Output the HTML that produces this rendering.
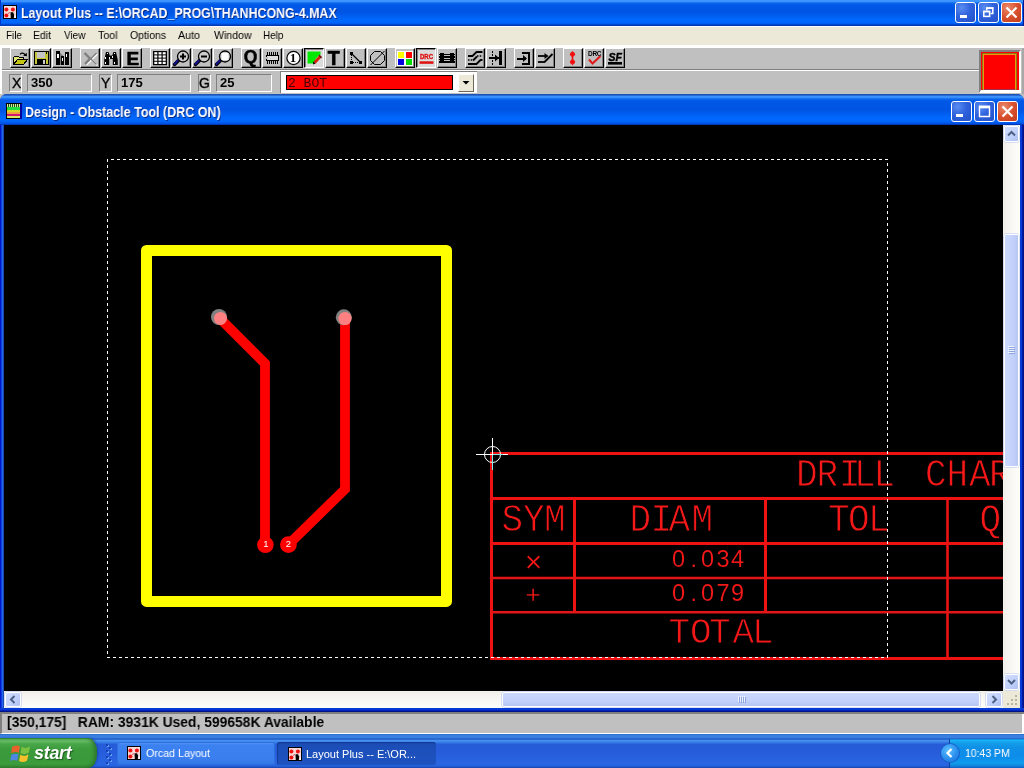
<!DOCTYPE html>
<html lang="en">
<head>
<meta charset="utf-8">
<title>Layout Plus -- E:\ORCAD_PROG\THANHCONG-4.MAX</title>
<style>
html,body{margin:0;padding:0;overflow:hidden;}
body{width:1024px;height:768px;overflow:hidden;position:relative;background:#c0c0c0;font-family:"Liberation Sans",sans-serif;font-size:11px;color:#000;}
.abs{position:absolute;}
svg{position:absolute;display:block;overflow:visible;}
.txt,#menu span,.sunk span,#status span,#start,#tk1,#tk2,#clock,#lay,svg{will-change:transform;}
/* ---------- main title bar ---------- */
#title{left:0;top:0;width:1024px;height:26px;background:linear-gradient(180deg,#3e96ff 0,#3b92fd 1.500px,#0d68ee 3px,#0058e7 5px,#0054e3 12px,#005ef0 16px,#0068ff 20px,#0066fc 22.500px,#0057ea 24px,#0038b6 25px,#0038b6 26px);}
#title .txt,#ctitle .txt{color:#fff;font-weight:bold;font-size:14px;white-space:nowrap;text-shadow:1px 1px 0 #0a2a86;transform-origin:0 0;}
.wb{width:21px;height:21px;border-radius:3px;box-sizing:border-box;border:1px solid #fff;background:radial-gradient(circle at 30% 25%,#5a8df0 0,#2f62dd 45%,#2350c8 100%);}
.wb.cl{background:radial-gradient(circle at 30% 25%,#ea8a6c 0,#d9512f 50%,#c23c1c 100%);}
/* ---------- menu ---------- */
#menu{left:0;top:26px;width:1024px;height:19px;background:#ece9d8;box-shadow:inset 0 1px 0 #fbfbff;}
#menu span{position:absolute;top:3px;font-size:11px;white-space:nowrap;transform-origin:0 0;}
/* ---------- toolbars ---------- */
#tb{left:0;top:45px;width:1024px;height:49px;background:#c0c0c0;}
.btn{position:absolute;top:3px;width:20px;height:20px;box-sizing:border-box;background:#c0c0c0;border-left:1px solid #fff;border-top:1px solid #fff;border-right:1px solid #000;border-bottom:1px solid #000;box-shadow:inset -1px -1px 0 #808080;}
.btn.dn{background:#dcdcdc;border-left:1px solid #000;border-top:1px solid #000;border-right:1px solid #fff;border-bottom:1px solid #fff;box-shadow:inset 1px 1px 0 #808080;}
.btn svg{left:-1px;top:-1px;width:20px;height:20px;}
.sunk{position:absolute;top:29px;height:18px;box-sizing:border-box;border-left:1px solid #808080;border-top:1px solid #808080;border-right:1px solid #fff;border-bottom:1px solid #fff;font-weight:bold;font-size:13px;line-height:16px;white-space:nowrap;}
.lab{top:0;font-weight:normal;font-size:14px;-webkit-text-stroke:0.350px #000;}
/* ---------- child window ---------- */
#child{left:0;top:94px;width:1024px;height:618px;background:#0831d9;border-radius:7px 7px 0 0;overflow:hidden;}
#ctitle{left:0;top:0;width:1024px;height:31px;background:linear-gradient(180deg,#1c53b4 0,#1c53b4 1.200px,#3b92fd 2px,#3b92fd 3.300px,#0d68ee 5px,#0058e7 7px,#0054e3 16px,#005ef0 20px,#0068ff 24px,#0066fc 27px,#0057ea 29px,#0048d4 30.300px,#00157a 31px);}
#canvas{left:4px;top:31px;width:999px;height:566px;background:#000;overflow:hidden;}
.sbtn{position:absolute;box-sizing:border-box;border:1px solid #fff;border-radius:2px;background:linear-gradient(135deg,#d3defd 0,#c0d0fb 60%,#aebff0 100%);box-shadow:0 0 0 0.5px #b4c4ee;}
/* ---------- status / taskbar ---------- */
#status{left:0;top:712px;width:1024px;height:22px;background:#c0c0c0;border-top:2px solid #808080;border-left:2px solid #808080;border-bottom:1px solid #fff;box-sizing:border-box;}
#status span{position:absolute;left:5px;top:0px;font-weight:bold;font-size:14px;transform:scaleX(0.99);white-space:pre;transform-origin:0 0;}
#task{left:0;top:734px;width:1024px;height:34px;background:linear-gradient(180deg,#2a63c0 0,#3a80e0 1.200px,#3a80e0 3.800px,#2664cc 4.600px,#2664cc 5.400px,#4590f0 6.200px,#4590f0 7px,#3478e4 8.500px,#275cd8 10.500px,#265cda 18px,#2a66e2 30px,#2662dc 32px,#1c4bb8 33.500px,#1a44a8 34px);}
</style>
</head>
<body>

<!-- ======= main title bar ======= -->
<div id="title" class="abs">
  <svg style="left:3px;top:5px" width="14" height="14" viewBox="0 0 14 14">
    <rect width="14" height="14" fill="#000"/><rect x="1" y="1" width="12" height="12" fill="#f8dada"/>
    <circle cx="3.400" cy="4.600" r="2" fill="#f01010"/><circle cx="9.900" cy="4.600" r="2" fill="#f01010"/><circle cx="3.400" cy="10.600" r="2" fill="#f01010"/>
    <path d="M7.500 7.200L10 7.300L11.200 9.800L10.800 13H7.800Z" fill="#000"/><path d="M11.500 10.500h1.500v2.500h-1.500z" fill="#fff"/><path d="M5 8.500L7 7.500" stroke="#d03030" stroke-width="0.800"/>
  </svg>
  <div class="abs" style="left:1023px;top:0;width:1px;height:26px;background:#00188f"></div><div class="abs" style="left:0;top:0;width:1px;height:26px;background:#0038cc"></div>
  <div class="abs txt" id="t1" style="left:21px;top:5px;transform:scaleX(0.884);">Layout Plus -- E:\ORCAD_PROG\THANHCONG-4.MAX</div>
  <div class="abs wb" style="left:955px;top:2px;"><svg width="19" height="19" viewBox="0 0 19 19"><rect x="4" y="12" width="7" height="3" fill="#fff"/></svg></div>
  <div class="abs wb" style="left:978px;top:2px;"><svg width="19" height="19" viewBox="0 0 19 19"><path d="M7.800 7.500V5.200h6v5.300h-2.300" fill="none" stroke="#fff" stroke-width="1.500"/><path d="M7.100 4.900h7.400" stroke="#fff" stroke-width="1.400"/><rect x="4.800" y="8.600" width="5.800" height="4.800" fill="none" stroke="#fff" stroke-width="1.500"/><path d="M4.100 8.400h7.200" stroke="#fff" stroke-width="1.400"/></svg></div>
  <div class="abs wb cl" style="left:1001px;top:2px;"><svg width="19" height="19" viewBox="0 0 19 19"><path d="M4.500 4.500L14.500 14.500M14.500 4.500L4.500 14.500" stroke="#fff" stroke-width="2.200"/></svg></div>
</div>

<!-- ======= menu bar ======= -->
<div id="menu" class="abs">
  <span style="left:5.5px;transform:scaleX(0.9)">File</span><span style="left:33px;transform:scaleX(0.95)">Edit</span><span style="left:63.5px;transform:scaleX(0.9)">View</span><span style="left:97.5px;transform:scaleX(0.97)">Tool</span><span style="left:130px;transform:scaleX(0.95)">Options</span><span style="left:178px;transform:scaleX(0.97)">Auto</span><span style="left:213.5px;transform:scaleX(0.96)">Window</span><span style="left:263px;transform:scaleX(0.9)">Help</span>
</div>

<!-- ======= toolbars ======= -->
<div id="tb" class="abs">
  <div class="abs" style="left:0;top:0;width:1024px;height:3px;background:#fff"></div>
  <div class="abs" style="left:0;top:0;width:2px;height:49px;background:#fff"></div>
  <div class="abs" style="left:2px;top:24px;width:977px;height:1px;background:#808080"></div>
  <div class="abs" style="left:2px;top:25px;width:977px;height:1px;background:#fff"></div>
  <div class="abs" style="left:1022px;top:3px;width:2px;height:46px;background:#a8a8a8"></div>
  <div class="btn" style="left:10px"><svg viewBox="0 0 20 20"><g shape-rendering="crispEdges"><path d="M3.500 16.500V9.500L4.500 8.500H8.500L9.500 9.500H13.500V11.500H7.500Z" fill="#e4e47c" stroke="#000"/><path d="M3.500 16.500L7.500 11.500H17.500L13.500 16.500Z" fill="#c4c414" stroke="#000"/></g><path d="M10 6.300Q12.500 3.800 15.300 6.800" fill="none" stroke="#000" stroke-width="1.200"/><path d="M13.200 7.800L17 8.300L16.700 4.800Z" fill="#000"/></svg></div>
  <div class="btn" style="left:31px"><svg viewBox="0 0 20 20"><g shape-rendering="crispEdges"><rect x="3.500" y="3.500" width="14" height="13" fill="#c4c43a" stroke="#000"/><rect x="6" y="4" width="8" height="6" fill="#c4c4c4"/><rect x="6" y="11" width="9" height="6" fill="#000"/><rect x="12" y="12" width="2" height="4" fill="#c8c8c8"/><rect x="15" y="4" width="1" height="2" fill="#000"/></g></svg></div>
  <div class="btn" style="left:52px"><svg viewBox="0 0 20 20"><g shape-rendering="crispEdges"><rect x="4" y="3" width="4" height="14" fill="#000"/><rect x="5" y="6" width="2" height="4" fill="#fff"/><path d="M8 4L11 8V17H8Z" fill="#808080"/><rect x="9" y="8" width="3" height="9" fill="#000"/><rect x="10" y="10" width="1" height="3" fill="#fff"/><rect x="13" y="4" width="4" height="13" fill="#000"/><rect x="14" y="6" width="1" height="3" fill="#fff"/></g></svg></div>
  <div class="btn" style="left:80px"><svg viewBox="0 0 20 20"><path d="M6 6L17.500 17.500M17.500 6L6.500 17" fill="none" stroke="#fff" stroke-width="1.100"/><path d="M5 5L16.500 16.500M16.500 5L5.500 16" fill="none" stroke="#808080" stroke-width="1.300"/><path d="M4.500 5L10 10.500L5 16" fill="none" stroke="#808080" stroke-width="2.400"/></svg></div>
  <div class="btn" style="left:101px"><svg viewBox="0 0 20 20"><path d="M5 4h2.500l1 2.500v1h3v-1L12.500 4H15l1.800 8V17h-5v-6h-3.600v6h-5v-5Z" fill="#000"/><g fill="#fff" shape-rendering="crispEdges"><rect x="6" y="5" width="1" height="1"/><rect x="13" y="5" width="1" height="1"/><rect x="4" y="9" width="1" height="2"/><rect x="8" y="9" width="1" height="2"/><rect x="11" y="8" width="1" height="2"/><rect x="4" y="14" width="1" height="2"/><rect x="13" y="14" width="1" height="2"/></g></svg></div>
  <div class="btn" style="left:122px"><svg viewBox="0 0 20 20"><text x="4.400" y="17" font-family="'Liberation Sans',sans-serif" font-weight="bold" font-size="19" fill="#000" stroke="#000" stroke-width="0.600">E</text></svg></div>
  <div class="btn" style="left:150px"><svg viewBox="0 0 20 20"><rect x="3" y="3" width="14" height="14.200" fill="#000"/><g fill="#fff"><rect x="4.3" y="4.2" width="3" height="2.200"/><rect x="8.5" y="4.2" width="3" height="2.200"/><rect x="12.7" y="4.2" width="3" height="2.200"/><rect x="4.3" y="7.4" width="3" height="2.200"/><rect x="8.5" y="7.4" width="3" height="2.200"/><rect x="12.7" y="7.4" width="3" height="2.200"/><rect x="4.3" y="10.6" width="3" height="2.200"/><rect x="8.5" y="10.6" width="3" height="2.200"/><rect x="12.7" y="10.6" width="3" height="2.200"/><rect x="4.3" y="13.8" width="3" height="2.200"/><rect x="8.5" y="13.8" width="3" height="2.200"/><rect x="12.7" y="13.8" width="3" height="2.200"/></g></svg></div>
  <div class="btn" style="left:171px"><svg viewBox="0 0 20 20"><path d="M7.500 12.500L3.500 16.500" stroke="#000" stroke-width="3.400" stroke-linecap="round"/><path d="M7 12.500L3.500 16" stroke="#10108c" stroke-width="2" stroke-linecap="round"/><circle cx="12" cy="8.500" r="5.500" fill="#cdcdcd" stroke="#000" stroke-width="1.300"/><path d="M9 8.500h6M12 5.500v6" stroke="#000" stroke-width="2"/></svg></div>
  <div class="btn" style="left:192px"><svg viewBox="0 0 20 20"><path d="M7.500 12.500L3.500 16.500" stroke="#000" stroke-width="3.400" stroke-linecap="round"/><path d="M7 12.500L3.500 16" stroke="#10108c" stroke-width="2" stroke-linecap="round"/><circle cx="12" cy="8.500" r="5.500" fill="#cdcdcd" stroke="#000" stroke-width="1.300"/><path d="M9 8.500h6" stroke="#000" stroke-width="2"/></svg></div>
  <div class="btn" style="left:213px"><svg viewBox="0 0 20 20"><path d="M7.500 12.500L3.500 16.500" stroke="#000" stroke-width="3.400" stroke-linecap="round"/><path d="M7 12.500L3.500 16" stroke="#10108c" stroke-width="2" stroke-linecap="round"/><circle cx="12" cy="8.500" r="5.500" fill="#cdcdcd" stroke="#000" stroke-width="1.300"/><rect x="8.500" y="5" width="7" height="7" fill="#fff"/></svg></div>
  <div class="btn" style="left:241px"><svg viewBox="0 0 20 20"><text x="2.800" y="15.400" font-family="'Liberation Sans',sans-serif" font-weight="bold" font-size="17.500" fill="#000" stroke="#000" stroke-width="0.500">Q</text></svg></div>
  <div class="btn" style="left:262px"><svg viewBox="0 0 20 20"><g shape-rendering="crispEdges"><path d="M5.500 4v4M7.500 4v4M9.500 4v4M11.500 4v4M13.500 4v4M15.500 4v4M5.500 12v4M7.500 12v4M9.500 12v4M11.500 12v4M13.500 12v4M15.500 12v4" stroke="#000"/><rect x="4.500" y="7.500" width="12" height="5" fill="#e0e0e0" stroke="#000"/><rect x="4" y="9" width="2" height="2" fill="#c0c0c0"/></g></svg></div>
  <div class="btn" style="left:283px"><svg viewBox="0 0 20 20"><circle cx="10.500" cy="10" r="6.600" fill="#fff" stroke="#000" stroke-width="1.200"/><text x="6.800" y="14.300" font-family="'Liberation Serif',serif" font-weight="bold" font-size="13" fill="#000">1</text></svg></div>
  <div class="btn dn" style="left:304px"><svg viewBox="0 0 20 20"><path d="M3.500 3.500H16.500V7Q11.500 8.500 10.500 15.500H3.500Z" fill="#00e800"/><path d="M10.500 14.800L16.500 8.200" stroke="#d82010" stroke-width="2.800"/><path d="M9 16.500L9.300 13.500L11.500 15.500Z" fill="#000"/><path d="M15.300 6.500L18 9L17 10.500L14.500 8Z" fill="#701008"/></svg></div>
  <div class="btn" style="left:325px"><svg viewBox="0 0 20 20"><text x="2.800" y="17.200" font-family="'Liberation Sans',sans-serif" font-weight="bold" font-size="19.500" fill="#000" stroke="#000" stroke-width="0.700">T</text></svg></div>
  <div class="btn" style="left:346px"><svg viewBox="0 0 20 20"><g shape-rendering="crispEdges"><rect x="4" y="4" width="3" height="3" fill="#000"/><rect x="4" y="13" width="3" height="3" fill="#000"/><rect x="13" y="13" width="3" height="3" fill="#000"/><path d="M5.500 7v6M7 14.500h6" stroke="#000" stroke-dasharray="1 1"/></g><path d="M5.500 5.500L14.500 14.500" stroke="#000" stroke-width="1.200"/></svg></div>
  <div class="btn" style="left:367px"><svg viewBox="0 0 20 20"><path d="M7.500 3.500H13.500L17.500 7.500V12.500L13.500 16.500H7.500L3.500 12.500V7.500Z" fill="none" stroke="#000" stroke-width="1"/><path d="M3.500 17L17.500 3" stroke="#000" stroke-width="1"/></svg></div>
  <div class="btn" style="left:395px"><svg viewBox="0 0 20 20"><g shape-rendering="crispEdges"><rect x="2" y="3" width="16" height="15" fill="#fff"/><rect x="3" y="4" width="6" height="6" fill="#ffff00"/><rect x="11" y="4" width="6" height="6" fill="#ff0000"/><rect x="3" y="11" width="6" height="6" fill="#0000e0"/><rect x="11" y="11" width="6" height="6" fill="#00e000"/></g></svg></div>
  <div class="btn dn" style="left:416px"><svg viewBox="0 0 20 20"><text x="4" y="10.500" font-family="'Liberation Sans',sans-serif" font-weight="bold" font-size="7.500" fill="#e01010" stroke="#e01010" stroke-width="0.400" textLength="13" lengthAdjust="spacingAndGlyphs">DRC</text><rect x="3.500" y="13.300" width="14" height="2.500" fill="#e01010"/></svg></div>
  <div class="btn" style="left:437px"><svg viewBox="0 0 20 20"><g shape-rendering="crispEdges"><rect x="3" y="5" width="4" height="10" fill="#000"/><rect x="13" y="5" width="4" height="10" fill="#000"/><path d="M2 6.500h16M2 9h16M2 11.500h16M2 14h16" stroke="#000" stroke-width="1.400"/></g></svg></div>
  <div class="btn" style="left:465px"><svg viewBox="0 0 20 20"><g fill="none" stroke="#000" stroke-width="1.800"><path d="M3 8h4.500L11.500 4H17.500"/><path d="M3 16h8.500L15.500 12H17.500"/><path d="M8 12.500L12 8.500"/></g><path d="M3 12h5M12 8h5.500" stroke="#000" stroke-width="1.600" stroke-dasharray="1.500 1.200"/></svg></div>
  <div class="btn" style="left:486px"><svg viewBox="0 0 20 20"><g shape-rendering="crispEdges"><path d="M6.500 3v14" stroke="#000" stroke-dasharray="2 1"/><rect x="13" y="3" width="3" height="14" fill="#000"/><path d="M3 10h10" stroke="#000" stroke-width="2"/></g><path d="M9 6.500L13 10L9 13.500Z" fill="#000"/></svg></div>
  <div class="btn" style="left:514px"><svg viewBox="0 0 20 20"><g shape-rendering="crispEdges" fill="none" stroke="#000" stroke-width="2"><path d="M8 5h7v11h-7"/><path d="M3 10.500h9"/></g><path d="M9 7L13 10.500L9 14Z" fill="#000"/></svg></div>
  <div class="btn" style="left:535px"><svg viewBox="0 0 20 20"><g fill="none" stroke="#000" stroke-width="1.800"><path d="M3 8h9"/><path d="M3 14h7"/><path d="M9.500 14L17.500 6"/></g><path d="M9.500 5L13.500 8L9.500 11Z" fill="#000"/></svg></div>
  <div class="btn" style="left:563px"><svg viewBox="0 0 20 20"><path d="M9.500 6v8" stroke="#f01010" stroke-width="1.600"/><path d="M9.500 3L12.400 6.200L9.500 9.400L6.600 6.200Z" fill="#f01010"/><circle cx="9.500" cy="6.200" r="2.300" fill="#f01010"/><path d="M9.500 10.800L12.400 14L9.500 17.200L6.600 14Z" fill="#f01010"/><circle cx="9.500" cy="14" r="2.300" fill="#f01010"/></svg></div>
  <div class="btn" style="left:584px"><svg viewBox="0 0 20 20"><text x="4" y="8.300" font-family="'Liberation Sans',sans-serif" font-weight="bold" font-size="6.500" fill="#000" textLength="13.500" lengthAdjust="spacing">DRC</text><path d="M5 11.500L8.500 15.500L16.500 8" fill="none" stroke="#e01818" stroke-width="2"/></svg></div>
  <div class="btn" style="left:605px"><svg viewBox="0 0 20 20"><text x="3.600" y="12.800" font-family="'Liberation Sans',sans-serif" font-weight="bold" font-style="italic" font-size="10.500" fill="#000" stroke="#000" stroke-width="0.400">SF</text><rect x="3" y="14" width="14" height="2.600" fill="#000"/></svg></div>
  <div class="sunk" style="left:9px;width:13px;"><span class="abs lab" style="left:1.500px;">X</span></div>
  <div class="sunk" style="left:27px;width:65px;"><span class="abs" style="left:3px;top:0;">350</span></div>
  <div class="sunk" style="left:99px;width:13px;"><span class="abs lab" style="left:1px;">Y</span></div>
  <div class="sunk" style="left:117px;width:74px;"><span class="abs" style="left:3px;top:0;">175</span></div>
  <div class="sunk" style="left:198px;width:13px;"><span class="abs lab" style="left:0px;">G</span></div>
  <div class="sunk" style="left:216px;width:56px;"><span class="abs" style="left:3px;top:0;">25</span></div>
  <!-- layer combo -->
  <div class="abs" style="left:280px;top:26px;width:197px;height:22px;background:#fff;border-left:1px solid #808080;border-top:1px solid #808080;box-sizing:border-box;"></div>
  <div class="abs" style="left:286px;top:30px;width:167px;height:15px;background:#ff0000;border:1px solid #000;box-sizing:border-box;font-family:'Liberation Mono',monospace;font-size:13px;line-height:13px;color:#480000;white-space:pre;"><span class="abs" id="lay" style="left:1.300px;top:1px;">2 BOT</span></div>
  <div class="abs" style="left:458px;top:29px;width:16px;height:18px;background:#ece9d8;border-left:1px solid #fff;border-top:1px solid #fff;border-right:1px solid #6d6a5c;border-bottom:1px solid #6d6a5c;box-sizing:border-box;"><svg width="14" height="16" viewBox="0 0 14 16"><path d="M3.500 6h7L7 9.500Z" fill="#000"/></svg></div>
  <!-- colour swatch -->
  <div class="abs" style="left:979px;top:5px;width:42px;height:43px;box-sizing:border-box;background:#ff0000;border-left:2px solid #808080;border-top:2px solid #808080;border-right:2px solid #fff;border-bottom:3px solid #fff;"></div>
  <div class="abs" style="left:982px;top:8px;width:35px;height:37px;box-sizing:border-box;border:1px solid #8a7a10;border-bottom-color:#a03050;"></div>
  <div class="abs" style="left:983px;top:9px;width:33px;height:36px;box-sizing:border-box;border:1px solid #e89a10;border-bottom:none;"></div>
</div>

<!-- ======= MDI child ======= -->
<div id="child" class="abs">
  <div id="ctitle" class="abs">
    <svg style="left:6px;top:9px" width="16" height="16" viewBox="0 0 16 16" shape-rendering="crispEdges">
      <rect width="16" height="16" fill="#000"/>
      <rect x="1" y="1" width="13" height="3" fill="#d8e8a0"/>
      <rect x="1" y="4" width="13" height="3" fill="#20e040"/>
      <rect x="1" y="7" width="13" height="2" fill="#d8d820"/>
      <rect x="1" y="9" width="13" height="2" fill="#f0a040"/>
      <rect x="1" y="11" width="13" height="2" fill="#d01870"/>
      <rect x="1" y="13" width="13" height="2" fill="#d8e860"/>
      <path d="M2.500 1v3M4.500 1v3M6.500 1v3M8.500 1v3M10.500 1v3M12.500 1v3" stroke="#185018" stroke-width="1"/>
      <rect x="14" y="1" width="2" height="15" fill="#0000a0"/>
    </svg>
    <div class="abs txt" id="t2" style="left:25px;top:10px;transform:scaleX(0.893);">Design - Obstacle Tool (DRC ON)</div>
    <div class="abs wb" style="left:951px;top:7px;"><svg width="19" height="19" viewBox="0 0 19 19"><rect x="4" y="12" width="7" height="3" fill="#fff"/></svg></div>
    <div class="abs wb" style="left:974px;top:7px;"><svg width="19" height="19" viewBox="0 0 19 19"><path d="M4.500 4.500h10v10h-10z" fill="none" stroke="#fff" stroke-width="1.400"/><path d="M4 5h11" stroke="#fff" stroke-width="2.600"/></svg></div>
    <div class="abs wb cl" style="left:997px;top:7px;"><svg width="19" height="19" viewBox="0 0 19 19"><path d="M4.500 4.500L14.500 14.500M14.500 4.500L4.500 14.500" stroke="#fff" stroke-width="2.200"/></svg></div>
  </div>
  <div id="canvas" class="abs">
    <svg style="left:0;top:0" width="999" height="566" viewBox="4 125 999 566">
      <!-- drill chart table -->
      <g stroke="#ee1212" fill="none" stroke-width="3">
        <path d="M491.500 452v208M490 453.500h520M490 498.500h520M490 543.500h520M490 658.500h520"/>
        <path d="M574.500 497v116M765.500 497v116"/>
        <path d="M947.500 497v163" stroke-width="2.600"/>
        <path d="M490 578h520M490 612.300h520" stroke-width="2.600" stroke="#e21616"/>
      </g>
      <!-- chart text (stroke font look: filled mono text eroded by a black outline) -->
      <g font-family="'Liberation Mono',monospace" fill="#f41818" stroke="#000" paint-order="fill stroke" id="ctext">
        <text font-size="36" stroke-width="0.800" transform="translate(0 485.500) scale(1 1.06)" y="0" x="796 816.5 839 854 873.5 906 925 946.5 969 989 1011">DRILL CHART</text>
        <text font-size="36" stroke-width="0.800" transform="translate(0 530.500) scale(1 1.06)" y="0" x="501.5 523 544">SYM</text>
        <text font-size="36" stroke-width="0.800" transform="translate(0 530.500) scale(1 1.06)" y="0" x="629.5 650.5 668.5 691.5">DIAM</text>
        <text font-size="36" stroke-width="0.800" transform="translate(0 530.500) scale(1 1.06)" y="0" x="828 848 868">TOL</text>
        <text font-size="36" stroke-width="0.800" transform="translate(0 530.500) scale(1 1.06)" y="0" x="979.5 1005 1027">QTY</text>
        <text font-family="'Liberation Sans',sans-serif" font-size="23.500" stroke-width="0.100" transform="translate(0 567.300) scale(1 1)" y="0" x="672 690.500 701 716.500 731">0.034</text>
        <text font-family="'Liberation Sans',sans-serif" font-size="23.500" stroke-width="0.100" transform="translate(0 601.200) scale(1 1)" y="0" x="672 690.500 701 716.500 731">0.079</text>
        <text font-size="36" stroke-width="0.800" transform="translate(0 643) scale(1 1.03)" y="0" x="668.5 690 709 732.5 752">TOTAL</text>
      </g>
      <g font-family="'Liberation Sans',sans-serif" fill="#f41818" stroke="#000" stroke-width="0.300" paint-order="fill stroke" id="dsym">
        <text font-size="30" x="524.800" y="572.300">×</text>
        <text font-size="26" x="525.500" y="602.900">+</text>
      </g>
      <!-- board outline selection (dashed) -->
      <g stroke="#fff" stroke-width="1" fill="none" stroke-dasharray="3 3" shape-rendering="crispEdges">
        <path d="M107 159.500H888" stroke-dashoffset="2"/><path d="M107 657.500H888"/>
        <path d="M107.500 159V658"/><path d="M887.500 159V658" stroke-dashoffset="2"/>
      </g>
      <!-- yellow obstacle -->
      <rect x="146.500" y="250.500" width="300" height="350.900" fill="none" stroke="#ffff00" stroke-width="11" stroke-linejoin="round"/>
      <rect x="152" y="256" width="289" height="340" fill="#000"/>
      <!-- tracks -->
      <g stroke="#ff0000" stroke-width="9.800" fill="none" stroke-linejoin="miter" stroke-linecap="butt">
        <path d="M219.500 318L265 363.500V544"/>
        <path d="M345 318V489.300L288.500 544.600"/>
      </g>
      <circle cx="265.400" cy="544.800" r="8.300" fill="#ff0000"/>
      <circle cx="288.400" cy="544.600" r="8.400" fill="#ff0000"/>
      <circle cx="219" cy="317" r="8" fill="#808080"/><circle cx="220.500" cy="318.400" r="6.500" fill="#ff8080"/>
      <circle cx="343.800" cy="317.300" r="8" fill="#808080"/><circle cx="345" cy="318.500" r="6.600" fill="#ff8080"/>
      <g font-family="'Liberation Sans',sans-serif" font-size="9.500" fill="#fff">
        <text x="263.200" y="547">1</text><text x="285.700" y="547">2</text>
      </g>
      <!-- cursor -->
      <g stroke="#fff" stroke-width="1" fill="none" shape-rendering="crispEdges">
        <path d="M476 454.500h32M492.500 438v32"/>
      </g>
      <circle cx="492.500" cy="454.500" r="8" fill="none" stroke="#fff" stroke-width="1"/>
      <path d="M492.500 455v15M493 454.500h10" stroke="#7fe8e8" stroke-width="1" shape-rendering="crispEdges"/>
    </svg>
  </div>
  <div class="abs" style="left:1003px;top:31px;width:17px;height:566px;background:linear-gradient(90deg,#f0efea 0,#f7f6f2 40%,#fefefb 100%)"></div>
  <div class="abs" style="left:4px;top:597px;width:999px;height:17px;background:linear-gradient(180deg,#f0efea 0,#f7f6f2 40%,#fefefb 100%)"></div>
  <div class="abs" style="left:1003px;top:597px;width:17px;height:17px;background:#ece9d8"></div>
  <!-- vertical -->
  <div class="sbtn" style="left:1004px;top:32px;width:15px;height:16px;"><svg width="13" height="14" viewBox="0 0 13 14"><path d="M3 8.500L6.500 5L10 8.500" fill="none" stroke="#4d6185" stroke-width="2"/></svg></div>
  <div class="sbtn" style="left:1004px;top:140px;width:15px;height:233px;background:linear-gradient(90deg,#cbd8fd 0,#c3d1fb 60%,#b6c6f4 100%);"><svg style="left:3px;top:111px" width="8" height="8" viewBox="0 0 8 8" shape-rendering="crispEdges"><path d="M1 1.500h6M1 3.500h6M1 5.500h6M1 7.500h6" stroke="#8ea4dc" stroke-width="1"/><path d="M0 .5h6M0 2.500h6M0 4.500h6M0 6.500h6" stroke="#eef3ff" stroke-width="1"/></svg></div>
  <div class="sbtn" style="left:1004px;top:580px;width:15px;height:16px;"><svg width="13" height="14" viewBox="0 0 13 14"><path d="M3 5L6.500 8.500L10 5" fill="none" stroke="#4d6185" stroke-width="2"/></svg></div>
  <!-- horizontal -->
  <div class="sbtn" style="left:5px;top:598px;width:16px;height:15px;"><svg width="14" height="13" viewBox="0 0 14 13"><path d="M8.500 3L5 6.500L8.500 10" fill="none" stroke="#4d6185" stroke-width="2"/></svg></div>
  <div class="sbtn" style="left:502px;top:598px;width:478px;height:15px;background:linear-gradient(180deg,#cbd8fd 0,#c3d1fb 60%,#b6c6f4 100%);"><svg style="left:235px;top:3px" width="8" height="8" viewBox="0 0 8 8" shape-rendering="crispEdges"><path d="M1.500 1v6M3.500 1v6M5.500 1v6M7.500 1v6" stroke="#8ea4dc" stroke-width="1"/><path d="M.5 0v6M2.500 0v6M4.500 0v6M6.500 0v6" stroke="#eef3ff" stroke-width="1"/></svg></div>
  <div class="sbtn" style="left:986px;top:598px;width:16px;height:15px;"><svg width="14" height="13" viewBox="0 0 14 13"><path d="M5.500 3L9 6.500L5.500 10" fill="none" stroke="#4d6185" stroke-width="2"/></svg></div>
  <svg style="left:1003px;top:597px" width="17" height="17" viewBox="0 0 17 17" shape-rendering="crispEdges"><g fill="#b8b49c"><rect x="12" y="4" width="2" height="2"/><rect x="8" y="8" width="2" height="2"/><rect x="12" y="8" width="2" height="2"/><rect x="4" y="12" width="2" height="2"/><rect x="8" y="12" width="2" height="2"/><rect x="12" y="12" width="2" height="2"/></g></svg>
  <div class="abs" style="left:0;top:614px;width:1024px;height:4px;background:linear-gradient(180deg,#0a3cd4 0,#0a3cd4 1px,#0538da 1px,#0538da 2px,#0226b4 2px,#0226b4 3px,#00138c 3px)"></div>
  <div class="abs" style="left:1020px;top:31px;width:4px;height:583px;background:linear-gradient(90deg,#0a3cd4 0,#0a3cd4 1px,#0538da 1px,#0538da 2px,#001a9c 2px,#001a9c 3px,#00138c 3px)"></div>
  <div class="abs" style="left:0;top:31px;width:4px;height:583px;background:linear-gradient(90deg,#0019cf 0,#0019cf 1px,#0d40dc 1px,#0d40dc 2px,#2464f2 2px,#2464f2 3px,#1a4cb0 3px)"></div>
</div>

<!-- ======= status bar ======= -->
<div id="status" class="abs"><span id="st1">[350,175]   RAM: 3931K Used, 599658K Available</span></div>
<div class="abs" style="left:1022px;top:714px;width:2px;height:20px;background:#fff"></div>

<!-- ======= taskbar ======= -->
<div id="task" class="abs">
  <div class="abs" style="left:0;top:4px;width:97px;height:30px;border-radius:0 9px 9px 0/0 14px 14px 0;background:linear-gradient(180deg,#2e7d2e 0,#58b258 1.500px,#68bd68 3px,#48a648 6px,#3c9c3c 11px,#3a993a 20px,#3c9d3c 26px,#2f822f 30px);box-shadow:inset -3px 0 4px -1px #2a6e2a, 1px 0 2px #1a48a8;"></div>
  <svg style="left:10px;top:9px" width="21" height="20" viewBox="0 0 18 17.5">
    <path d="M1.500 3.500Q5 1 8.500 3L7.500 8.500Q4.500 7 1 9Z" fill="#e8632c"/>
    <path d="M10 3.300Q13.500 5.500 17.500 2.800L16.300 8.300Q13 10.500 9 8.800Z" fill="#7cc242"/>
    <path d="M.8 10.500Q4 8.500 7.300 10L6.200 15.500Q3 14 0 16Z" fill="#4f86e0"/>
    <path d="M8.800 10.300Q12.500 12.500 16 9.800L14.800 15.300Q11.500 17.800 7.700 15.800Z" fill="#f5c02c"/>
  </svg>
  <div class="abs" id="start" style="left:34px;top:8px;color:#fff;font-weight:bold;font-style:italic;font-size:18px;line-height:22px;text-shadow:1px 1px 1px #1d5a1d;letter-spacing:-0.300px;">start</div>
  <svg style="left:106px;top:10px" width="6" height="21" viewBox="0 0 6 21" shape-rendering="crispEdges"><g fill="#5f9cf6"><rect x="1" y="1" width="2" height="2"/><rect x="1" y="7" width="2" height="2"/><rect x="1" y="13" width="2" height="2"/><rect x="1" y="19" width="2" height="2"/><rect x="4" y="4" width="2" height="2"/><rect x="4" y="10" width="2" height="2"/><rect x="4" y="16" width="2" height="2"/></g><g fill="#1741b4"><rect x="0" y="0" width="2" height="2"/><rect x="0" y="6" width="2" height="2"/><rect x="0" y="12" width="2" height="2"/><rect x="0" y="18" width="2" height="2"/><rect x="3" y="3" width="2" height="2"/><rect x="3" y="9" width="2" height="2"/><rect x="3" y="15" width="2" height="2"/></g></svg>
  <div class="abs" style="left:117px;top:8px;width:158px;height:23px;border-radius:3px;background:linear-gradient(180deg,#5a9af4 0,#3c81f0 3px,#3a7eee 18px,#3376e6 23px);box-shadow:inset 0 0 0 1px #2f6fdf;"></div>
  <div class="abs" style="left:277px;top:8px;width:159px;height:23px;border-radius:3px;background:linear-gradient(180deg,#1a48ac 0,#1c4eb8 4px,#1e53c0 23px);box-shadow:inset 1px 1px 1px #123a94;"></div>
  <svg style="left:127px;top:12px" width="14" height="14" viewBox="0 0 14 14"><rect width="14" height="14" fill="#000"/><rect x="1" y="1" width="12" height="12" fill="#f8dada"/>
    <circle cx="3.400" cy="4.600" r="2" fill="#f01010"/><circle cx="9.900" cy="4.600" r="2" fill="#f01010"/><circle cx="3.400" cy="10.600" r="2" fill="#f01010"/>
    <path d="M7.500 7.200L10 7.300L11.200 9.800L10.800 13H7.800Z" fill="#000"/><path d="M11.500 10.500h1.500v2.500h-1.500z" fill="#fff"/><path d="M5 8.500L7 7.500" stroke="#d03030" stroke-width="0.800"/></svg>
  <svg style="left:288px;top:13px" width="14" height="14" viewBox="0 0 14 14"><rect width="14" height="14" fill="#000"/><rect x="1" y="1" width="12" height="12" fill="#f8dada"/>
    <circle cx="3.400" cy="4.600" r="2" fill="#f01010"/><circle cx="9.900" cy="4.600" r="2" fill="#f01010"/><circle cx="3.400" cy="10.600" r="2" fill="#f01010"/>
    <path d="M7.500 7.200L10 7.300L11.200 9.800L10.800 13H7.800Z" fill="#000"/><path d="M11.500 10.500h1.500v2.500h-1.500z" fill="#fff"/><path d="M5 8.500L7 7.500" stroke="#d03030" stroke-width="0.800"/></svg>
  <div class="abs" id="tk1" style="left:146px;top:13px;transform:scaleX(0.97);color:#fff;font-size:11px;white-space:nowrap;transform-origin:0 0;">Orcad Layout</div>
  <div class="abs" id="tk2" style="left:306px;top:14px;color:#fff;font-size:11px;white-space:nowrap;transform-origin:0 0;">Layout Plus -- E:\OR...</div>
  <div class="abs" style="left:949px;top:5px;width:75px;height:29px;background:linear-gradient(180deg,#1287dc 0,#19b0f4 1.500px,#139de9 4px,#0f8fe6 9px,#0d8dea 18px,#0f9cee 24px,#1283d8 27px,#0b5fc6 29px);border-left:1px solid #0a3f9e;"></div>
  <div class="abs" style="left:941px;top:10px;width:18px;height:18px;border-radius:9px;background:radial-gradient(circle at 40% 35%,#5cc0ff 0,#2a8eee 55%,#1668d2 100%);box-shadow:0 0 0 1px #1a5cc4;"><svg width="18" height="18" viewBox="0 0 18 18"><path d="M10.500 5L6.500 9L10.500 13" fill="none" stroke="#fff" stroke-width="2.200"/></svg></div>
  <div class="abs" id="clock" style="left:965px;top:13px;transform:scaleX(0.95);color:#fff;font-size:11px;white-space:nowrap;transform-origin:0 0;">10:43 PM</div>
</div>

</body>
</html>
